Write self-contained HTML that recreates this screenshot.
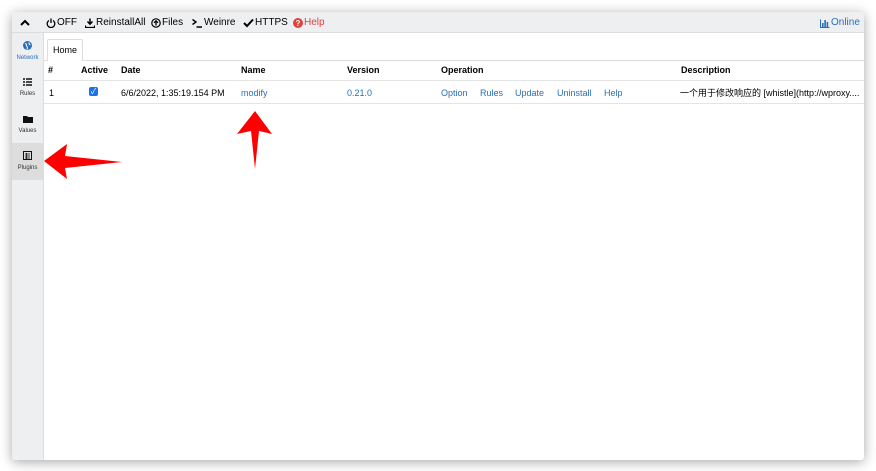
<!DOCTYPE html>
<html><head><style>
body{margin:0;width:876px;height:471px;background:#fff;font-family:"Liberation Sans","Noto Sans CJK SC",sans-serif;position:relative;overflow:hidden}
.win{position:absolute;left:12px;top:12px;width:852px;height:448px;background:#fff;box-shadow:0 2px 12px rgba(0,0,0,.35);border-radius:3px;overflow:hidden}
.tb{position:absolute;left:0;top:0;right:0;height:20px;background:#eeeff1;border-bottom:1px solid #ddd;font-size:10px;color:#000}
.tb span{position:absolute;top:5px;height:12px;line-height:12px;white-space:nowrap;display:flex;align-items:center}
.tb svg{margin-right:1px}
.side{position:absolute;left:0;top:21px;width:31px;bottom:0;background:#eeeff1;border-right:1px solid #ddd}
.si{position:absolute;left:0;width:31px;text-align:center;font-size:6px;color:#333;line-height:8px}
.si svg{display:block;margin:0 auto 4px}
.main{position:absolute;left:32px;top:21px;right:0;bottom:0}
.tab{position:absolute;left:3px;top:6px;width:34px;height:21px;border:1px solid #ddd;border-bottom:none;background:#fff;font-size:9px;line-height:21px;text-align:center;border-radius:2px 2px 0 0}
.tabline{position:absolute;left:0;right:0;top:27px;border-top:1px solid #ddd}
.hd,.row{position:absolute;left:0;right:0;font-size:9px}
.hd{top:28px;height:19px;border-bottom:1px solid #e4e4e4;font-weight:bold}
.row{top:48px;height:22px;border-bottom:1px solid #e4e4e4}
.hd span,.row span{position:absolute;top:4px;height:11px;line-height:11px;white-space:nowrap}
.row span{top:7px}
.a{color:#2a6ebb}
</style></head><body>
<div class="win">
<div class="tb">
<span style="left:8px"><svg width="10" height="8" viewBox="0 0 10 8"><path d="M1 6 L5 2 L9 6" stroke="#000" stroke-width="2" fill="none"/></svg></span>
<span style="left:34px"><svg width="10" height="10" viewBox="0 0 10 10"><path d="M3 2.5A3.8 3.8 0 1 0 7 2.5" stroke="#000" stroke-width="1.3" fill="none"/><path d="M5 0.5V5" stroke="#000" stroke-width="1.3"/></svg>OFF</span>
<span style="left:73px"><svg width="10" height="10" viewBox="0 0 10 10"><path d="M5 0.5V6M2.5 3.5L5 6.2L7.5 3.5" stroke="#000" stroke-width="1.5" fill="none"/><path d="M0.5 7.5V9.5H9.5V7.5" stroke="#000" stroke-width="1.3" fill="none"/></svg>ReinstallAll</span>
<span style="left:139px"><svg width="10" height="10" viewBox="0 0 10 10"><circle cx="5" cy="5" r="4.2" stroke="#000" stroke-width="1.2" fill="none"/><path d="M5 7.5V3M3 4.8L5 2.8L7 4.8" stroke="#000" stroke-width="1.3" fill="none"/></svg>Files</span>
<span style="left:180px"><svg width="11" height="10" viewBox="0 0 11 10"><path d="M0.5 1.5L4 4L0.5 6.5" stroke="#000" stroke-width="1.4" fill="none"/><path d="M4.5 9H10" stroke="#000" stroke-width="1.4"/></svg>Weinre</span>
<span style="left:231px"><svg width="11" height="10" viewBox="0 0 11 10"><path d="M1 5L4 8L10 1.5" stroke="#000" stroke-width="2" fill="none"/></svg>HTTPS</span>
<span style="left:281px;color:#e0413d"><svg width="10" height="10" viewBox="0 0 10 10"><circle cx="5" cy="5" r="5" fill="#e0413d"/><text x="5" y="8.2" font-size="8" font-weight="bold" fill="#fff" text-anchor="middle" font-family="Liberation Sans">?</text></svg>Help</span>
<span style="left:808px;color:#2a6ebb"><svg width="10" height="9" viewBox="0 0 10 9"><path d="M0.5 9V0.5M0.5 8.5H9.5" stroke="#2a6ebb" stroke-width="1"/><rect x="2" y="4" width="1.6" height="4.5" fill="#2a6ebb"/><rect x="4.3" y="1" width="1.6" height="7.5" fill="#2a6ebb"/><rect x="6.6" y="3" width="1.6" height="5.5" fill="#2a6ebb"/></svg>Online</span>
</div>
<div class="side">
<div class="si" style="top:8px;color:#2a6ebb"><svg width="9" height="9" viewBox="0 0 9 9"><circle cx="4.5" cy="4.5" r="4.5" fill="#2a6ebb"/><path d="M2 2.5Q4 3 3.5 5Q5 6 4 8.5M6 1.2Q5.5 3 7.5 4" stroke="#fff" stroke-width="1" fill="none"/></svg>Network</div>
<div class="si" style="top:45px"><svg width="9" height="8" viewBox="0 0 9 8"><path d="M0 1H2M3 1H9M0 4H2M3 4H9M0 7H2M3 7H9" stroke="#111" stroke-width="1.6"/></svg>Rules</div>
<div class="si" style="top:82px"><svg width="10" height="8" viewBox="0 0 10 8"><path d="M0 1H4L5 2H10V8H0Z" fill="#111"/></svg>Values</div>
<div class="si" style="top:110px;height:37px;background:#ddd;padding-top:8px;box-sizing:border-box"><svg width="9" height="9" viewBox="0 0 9 9"><rect x="0.5" y="0.5" width="8" height="8" stroke="#111" fill="none"/><path d="M2 3H7M2 5H7M2 7H7M3.5 2V8" stroke="#111" stroke-width="0.8"/></svg>Plugins</div>
</div>
<div class="main">
<div class="tabline"></div>
<div class="tab">Home</div>
<div class="hd"><span style="left:4px">#</span><span style="left:37px">Active</span><span style="left:77px">Date</span><span style="left:197px">Name</span><span style="left:303px">Version</span><span style="left:397px">Operation</span><span style="left:637px">Description</span></div>
<div class="row"><span style="left:5px">1</span><span style="left:45px;top:6px;width:9px;height:9px;background:#1a73e8;border-radius:2px;color:#fff;font-size:8px;line-height:9px;text-align:center">✓</span><span style="left:77px">6/6/2022, 1:35:19.154 PM</span><span class="a" style="left:197px">modify</span><span class="a" style="left:303px">0.21.0</span><span class="a" style="left:397px">Option</span><span class="a" style="left:436px">Rules</span><span class="a" style="left:471px">Update</span><span class="a" style="left:513px">Uninstall</span><span class="a" style="left:560px">Help</span><span style="left:636px">一个用于修改响应的 [whistle](http://wproxy....</span></div>
</div>
</div>
<svg style="position:absolute;left:0;top:0" width="876" height="471">
<polygon points="44,161 67,144 65,156 122,162 65,168 67,179" fill="#f00"/>
<polygon points="255,111 272,134 259,131 255,169 251,131 237,134" fill="#f00"/>
</svg>
</body></html>
